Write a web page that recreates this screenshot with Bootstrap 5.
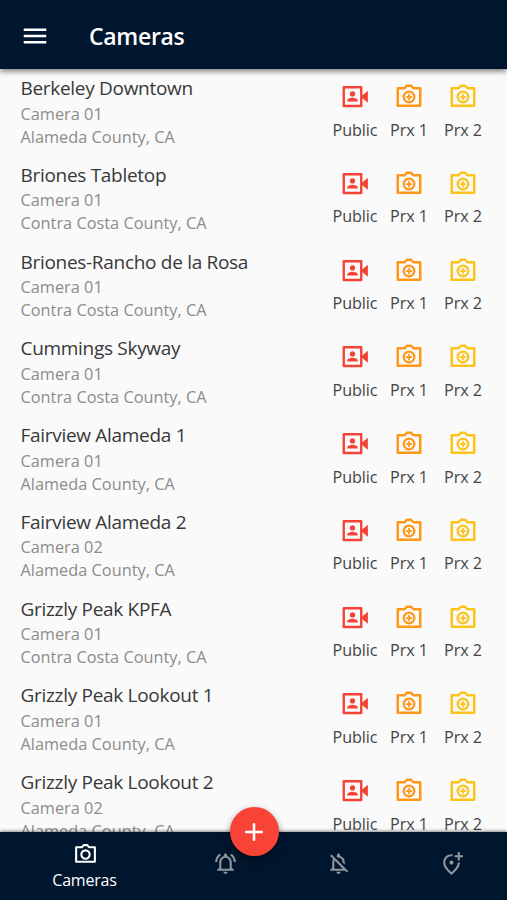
<!DOCTYPE html>
<html lang="en">
<head>
<meta charset="utf-8">
<meta name="viewport" content="width=device-width, initial-scale=1">
<title>Cameras</title>
<link href="https://cdn.jsdelivr.net/npm/bootstrap@5.3.0/dist/css/bootstrap.min.css" rel="stylesheet">
<style>
body{font-family:"Open Sans","Noto Sans",sans-serif;background:#fafafa;color:#3c3c3c;height:900px}
.bar{background:#00162e;color:#fff}
.topbar{height:69px;padding:2px 0 0 20px;box-shadow:0 2px 6px rgba(0,0,0,.55);z-index:2}
.topbar h1{font-size:23px;font-weight:600;letter-spacing:-.3px;margin-left:39px;line-height:30px}
.cam{height:86.75px;padding:5px 17px 0 20.5px}
.cam-name{font-size:19px;line-height:28.5px;letter-spacing:-.3px;color:#383838}
.cam-info{font-size:16.3px;line-height:23px;letter-spacing:.02px;color:#8c8c8c}
.feed{width:54px;font-size:16.2px;line-height:22px;letter-spacing:-.1px;padding-top:8px;color:#444}
.feed svg{width:30px;height:30px;margin-bottom:6.5px}
.public{color:#f44336}.prx1{color:#ff9817}.prx2{color:#fcc419}
.tabs{height:68.5px;z-index:2;box-shadow:0 -1px 3px rgba(0,0,0,.45);padding:0 0 0 28px}
.tab{width:113px;color:#8f979d}
.tab svg{width:25px;height:25px}
.tab:not(.active){padding:0 0 4px 2px}
.tab.active{color:#fff;font-size:16px;line-height:22px;letter-spacing:-.2px;padding-top:10px}
.tab.active svg{margin:0 0 2px 1px}
.fab{width:49px;height:49px;left:229.5px;top:-24.5px;background:#f94336;box-shadow:0 3px 7px rgba(0,0,0,.45)}
</style>
<script src="https://cdn.jsdelivr.net/npm/bootstrap@5.3.0/dist/js/bootstrap.bundle.min.js"></script>
</head>
<body class="d-flex flex-column overflow-hidden">
<svg class="d-none">
  <symbol id="i-public" viewBox="0 0 24 24"><path fill="none" stroke="currentColor" stroke-width="1.9" stroke-linejoin="round" d="M3 4.2h14v15H3z"/><path fill="currentColor" d="M17.5 11 22.3 7v9.6L17.5 12.600zM5.800 15.600v-.8c0-1.500 2.700-2.200 4.200-2.200s4.200.7 4.200 2.200v.8z"/><circle cx="10" cy="9.500" r="2.100" fill="currentColor"/></symbol>
  <symbol id="i-prx" viewBox="0 0 24 24"><g fill="none" stroke="currentColor" stroke-width="2" stroke-linejoin="round"><path d="M3 5h5.500l1.800-2h3.400l1.800 2H21v14H3z"/><circle cx="12" cy="12" r="4.300" stroke-width="1.800"/><path stroke-width="1.400" d="M12 9.500v5M9.500 12h5"/></g></symbol>
  <symbol id="i-camera" viewBox="0 0 24 24"><g fill="none" stroke="currentColor" stroke-width="2" stroke-linejoin="round"><path d="M3 5h5.500l1.800-2h3.400l1.800 2H21v14H3z"/><circle cx="12" cy="12" r="4"/></g></symbol>
</svg>

<header class="bar topbar d-flex align-items-center position-relative flex-shrink-0">
  <svg width="30" height="30" viewBox="0 0 24 24" fill="#fff"><path d="M3 18h18v-2H3zm0-5h18v-2H3zm0-7v2h18V6z"/></svg>
  <h1 class="mb-0">Cameras</h1>
</header>

<main id="list" class="flex-grow-1 overflow-hidden" style="min-height:0"></main>

<nav class="bar tabs d-flex position-relative flex-shrink-0">
  <div class="tab active d-flex flex-column align-items-center">
    <svg class="flex-shrink-0"><use href="#i-camera"/></svg><span>Cameras</span>
  </div>
  <div class="tab d-flex align-items-center justify-content-center ms-auto">
    <svg viewBox="0 0 24 24" fill="currentColor"><path d="M12 22c1.1 0 2-.9 2-2h-4c0 1.1.9 2 2 2zm6-6v-5c0-3.07-1.63-5.64-4.5-6.32V4c0-.83-.67-1.5-1.5-1.5s-1.5.67-1.5 1.5v.68C7.64 5.36 6 7.92 6 11v5l-2 2v1h16v-1l-2-2zm-2 1H8v-6c0-2.48 1.51-4.5 4-4.5s4 2.02 4 4.5v6zM7.58 4.08 6.15 2.65C3.75 4.48 2.17 7.3 2.03 10.5h2c.15-2.65 1.51-4.97 3.55-6.42zm12.39 6.42h2c-.15-3.2-1.73-6.02-4.12-7.85l-1.42 1.43c2.02 1.45 3.39 3.77 3.54 6.42z"/></svg>
  </div>
  <div class="tab d-flex align-items-center justify-content-center">
    <svg viewBox="0 0 24 24" fill="currentColor"><path d="M12 22c1.1 0 2-.9 2-2h-4c0 1.1.9 2 2 2zm0-15.5c2.49 0 4 2.02 4 4.5v.1l2 2V11c0-3.07-1.63-5.64-4.5-6.32V4c0-.83-.67-1.5-1.5-1.5s-1.5.67-1.5 1.5v.68c-.24.06-.47.15-.69.23l1.64 1.64c.18-.02.36-.05.55-.05zM5.41 3.35 4 4.76l2.81 2.81C6.29 8.57 6 9.74 6 11v5l-2 2v1h14.24l1.74 1.74 1.41-1.41L5.41 3.35zM16 17H8v-6c0-.68.12-1.32.34-1.9L16 16.76V17z"/></svg>
  </div>
  <div class="tab d-flex align-items-center justify-content-center">
    <svg viewBox="0 0 24 24" fill="currentColor"><path d="M20 1v3h3v2h-3v3h-2V6h-3V4h3V1zm-8 12c1.1 0 2-.9 2-2s-.9-2-2-2-2 .9-2 2 .9 2 2 2zm1-9.94v2.02A6.53 6.53 0 0 0 12 5c-3.35 0-6 2.57-6 6.2 0 2.34 1.95 5.44 6 9.14 4.05-3.7 6-6.79 6-9.14V11h2v.2c0 3.32-2.67 7.25-8 11.8-5.33-4.55-8-8.48-8-11.8C4 6.22 7.8 3 12 3c.34 0 .67.02 1 .06z"/></svg>
  </div>
  <div class="fab rounded-circle position-absolute d-flex align-items-center justify-content-center">
    <svg width="30" height="30" viewBox="0 0 24 24" fill="#fff"><path d="M19 13h-6v6h-2v-6H5v-2h6V5h2v6h6z"/></svg>
  </div>
</nav>

<script>
const cameras = [
  ["Berkeley Downtown", "01", "Alameda"],
  ["Briones Tabletop", "01", "Contra Costa"],
  ["Briones-Rancho de la Rosa", "01", "Contra Costa"],
  ["Cummings Skyway", "01", "Contra Costa"],
  ["Fairview Alameda 1", "01", "Alameda"],
  ["Fairview Alameda 2", "02", "Alameda"],
  ["Grizzly Peak KPFA", "01", "Contra Costa"],
  ["Grizzly Peak Lookout 1", "01", "Alameda"],
  ["Grizzly Peak Lookout 2", "02", "Alameda"]
];
const feed = (cls, icon, label) =>
  `<div class="feed d-flex flex-column align-items-center text-nowrap"><svg class="${cls}"><use href="#${icon}"/></svg><span>${label}</span></div>`;
document.getElementById("list").innerHTML = cameras.map(([name, number, county]) => `
  <div class="cam d-flex justify-content-between">
    <div class="text-nowrap">
      <div class="cam-name">${name}</div>
      <div class="cam-info">Camera ${number}</div>
      <div class="cam-info">${county} County, CA</div>
    </div>
    <div class="d-flex">
      ${feed("public", "i-public", "Public")}${feed("prx1", "i-prx", "Prx 1")}${feed("prx2", "i-prx", "Prx 2")}
    </div>
  </div>`).join("");
</script>
</body>
</html>
